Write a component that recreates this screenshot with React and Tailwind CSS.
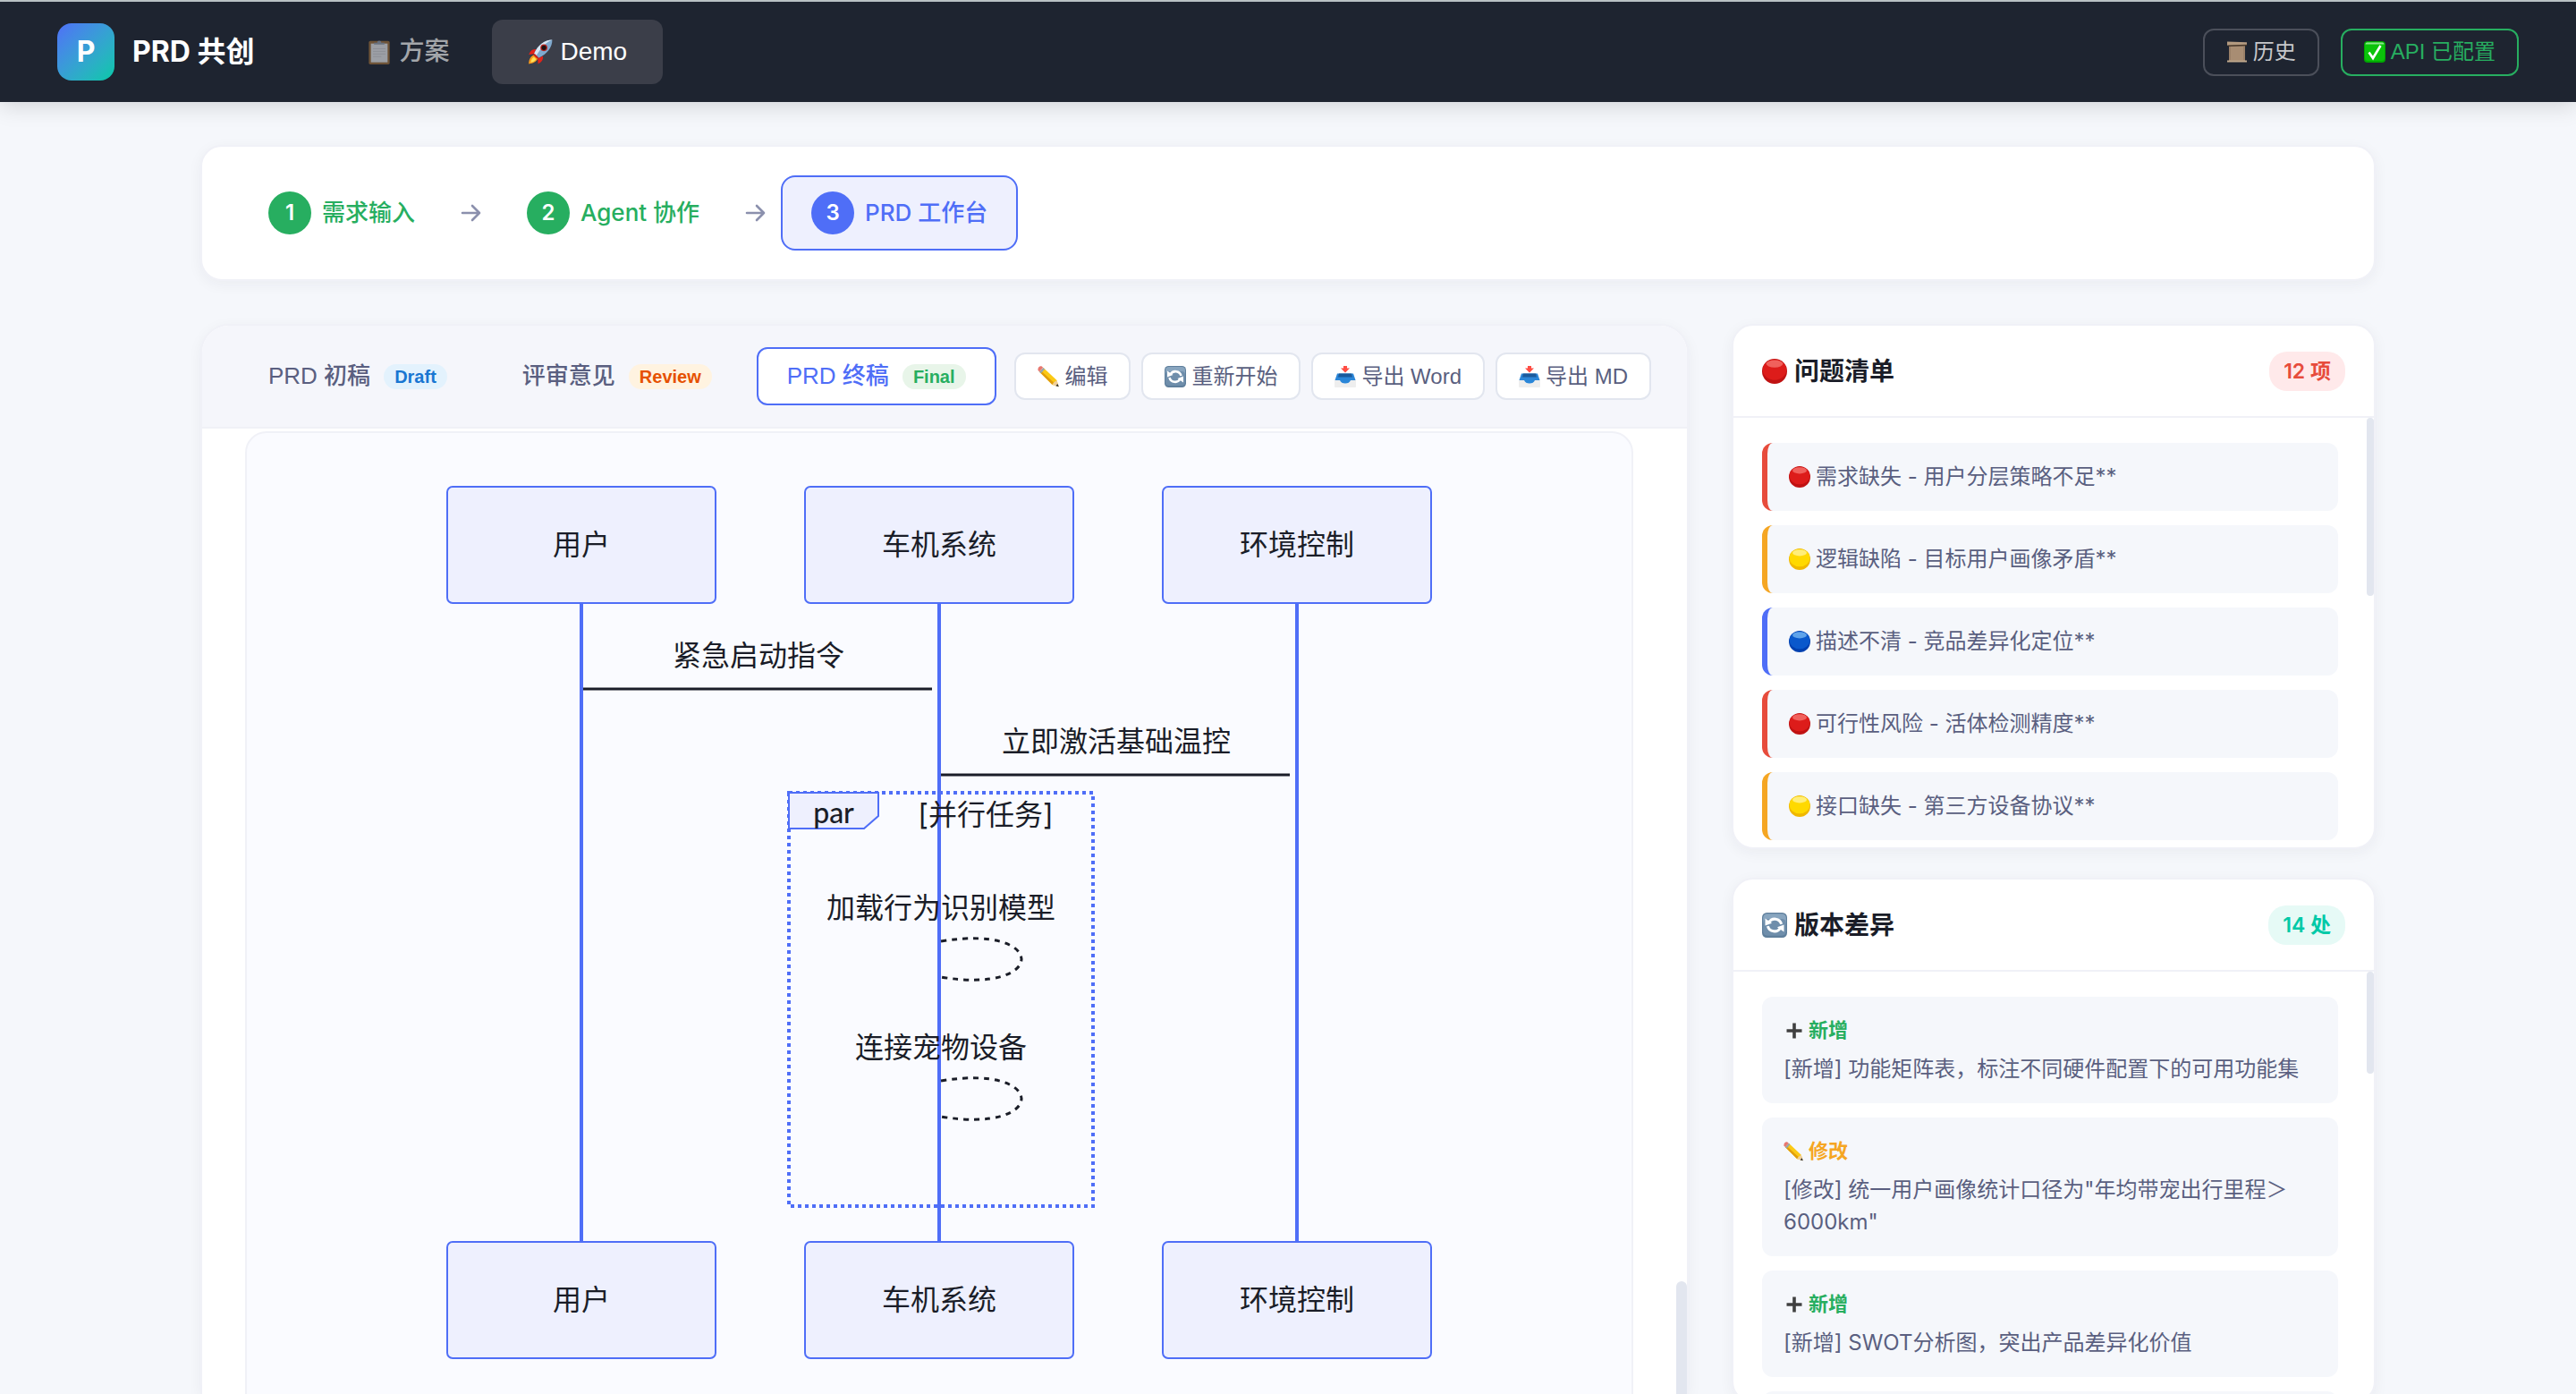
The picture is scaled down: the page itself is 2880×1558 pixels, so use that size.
import React, { useState } from 'react';

const uiFont = "font-['Inter','Noto_Sans_CJK_SC',sans-serif]";
const btnFont = "font-['Liberation_Sans','Noto_Sans_CJK_SC',sans-serif]";

/* ---------- Icons ---------- */

const Clipboard = ({ className }) => (
    <svg className={className} viewBox="0 0 24 24">
        <rect x="2" y="1.5" width="20" height="22.5" rx="1.5" fill="#a3733c" />
        <rect x="4" y="4" width="16" height="18" fill="#f1f1f3" />
        <path d="M6 9h12M6 11.5h12M6 14h12M6 16.500h8" stroke="#d5d5da" strokeWidth=".8" />
        <path d="M7 5V3.200h3a2 2 0 0 1 4 0h3V5z" fill="#9aa4b4" />
    </svg>
);

const Rocket = ({ className }) => (
    <svg className={className} viewBox="0 0 24 24">
        <path d="M8 9.500C4.500 9 2.500 11 1 14.500l5.500-.500zM14.500 16c.500 3.500-1 5.500-4.500 7.500l-.500-5.500z" fill="#e2231a" />
        <path d="M6 15c-3 1-5 4-5 8.500 4-.500 7.500-2 8.500-5z" fill="#ff9d1c" />
        <path d="M6 17c-1.500.800-2.700 2.300-3 5 2.500-.400 4-1.300 5-3z" fill="#ffe45c" />
        <path d="M23.500.500C16.500.500 10 5 6 14l4 4c9-4 13.500-10.500 13.500-17.500z" fill="#7fa9cf" />
        <path d="M23.500.500C16.500.500 10 5 6 14l2 2C13 8 17 3 23.500.500z" fill="#d9e6f2" />
        <circle cx="15.500" cy="8" r="3.300" fill="#b5211c" />
        <circle cx="15.500" cy="8" r="2.200" fill="#1b1416" />
        <path d="M6.500 13.500l4 4-1.500 1-3.500-3.500z" fill="#c8201a" />
    </svg>
);

const Scroll = ({ className }) => (
    <svg className={className} viewBox="0 0 24 24">
        <path d="M3 2h18v20H3z" fill="#9a8068" />
        <path d="M5 6h14v15H5z" fill="#a88d73" />
        <path d="M1 .500l22 .800v3L1 5z" fill="#b39a80" />
        <path d="M1 4.500l22-.700v1.500L3 6z" fill="#4a392b" />
        <path d="M1 21.500h22v2H1z" fill="#c0a88d" />
    </svg>
);

const CheckBox = ({ className }) => (
    <svg className={className} viewBox="0 0 24 24">
        <rect width="24" height="24" rx="4" fill="#00a800" />
        <rect x="1" y="1" width="22" height="21" rx="3.500" fill="#0bc30b" />
        <path d="M3 1.500h18a2 2 0 0 1 1.500 2H1.500A2 2 0 0 1 3 1.500z" fill="#8be98b" />
        <path d="M5.500 12.500l4.500 6.500 8.500-14" fill="none" stroke="#fff" strokeWidth="2.600" />
    </svg>
);

const Pencil = ({ className }) => (
    <svg className={className} viewBox="0 0 24 24">
        <path d="M6.500 2l15 14 2 7-7-2L2 6.500z" fill="#fbc914" />
        <path d="M4 5.500L18.200 18.500l-1.700 2.500L2 6.500z" fill="#e09d0c" />
        <path d="M21.500 16l2 7-7-2 1.700-2.500z" fill="#f0cf9c" />
        <path d="M22.500 20l1.300 3.300-3.500-1z" fill="#333" />
        <path d="M8 3.500L3.800 8.200 2 6.500 6.500 2z" fill="#93a5b5" />
        <path d="M6.200 1.800L2 6.500.500 4.700C0 2 2 0 4.500.300z" fill="#e8776f" />
    </svg>
);

const Refresh = ({ className }) => (
    <svg className={className} viewBox="0 0 24 24">
        <rect width="24" height="24" rx="4.500" fill="#5f7f9c" />
        <rect x="1" y="1" width="22" height="12" rx="4" fill="#88a5bf" />
        <rect x="1" y="6" width="22" height="16" rx="4" fill="#6f8eab" />
        <path d="M6.500 9.500a6.500 6.500 0 0 1 12 1.500M17.500 14.500a6.500 6.500 0 0 1-12-1.500" fill="none" stroke="#fff" strokeWidth="2.600" />
        <path d="M3 5.500v7l6.500-2.500zM21 18.500v-7L14.500 14z" fill="#fff" />
    </svg>
);

const Outbox = ({ className }) => (
    <svg className={className} viewBox="0 0 24 24">
        <path d="M3.500 8.500h17l3.500 8v6.500a1 1 0 0 1-1 1H1a1 1 0 0 1-1-1v-6.500z" fill="#eeeeee" />
        <path d="M3 8.500h18l2.500 7.500H18c-1 2.500-3 3.500-6 3.500S7 18.500 6 16H.500z" fill="#2a86d8" />
        <path d="M5 8.500h14l1 4H4z" fill="#1a5a9c" />
        <path d="M10 0h4v2.500h3l-5 5-5-5h3z" fill="#ff4d44" />
    </svg>
);

const Plus = ({ className }) => (
    <svg className={className} viewBox="0 0 22 22">
        <path d="M12 2.500v17M3.500 11h17" stroke="#404040" strokeWidth="3.600" />
    </svg>
);

const ballTone = {
    red: { base: 'fill-[#c01212]', mid: 'fill-[#dd1c1a]', top: 'fill-[#f0615c]' },
    yellow: { base: 'fill-[#f0b800]', mid: 'fill-[#ffd900]', top: 'fill-[#ffee7a]' },
    blue: { base: 'fill-[#0040b0]', mid: 'fill-[#0a58cc]', top: 'fill-[#5fa3ea]' },
};

const Ball = ({ tone, className }) => (
    <svg className={className} viewBox="0 0 24 24">
        <circle cx="12" cy="12" r="12" className={ballTone[tone].base} />
        <ellipse cx="12" cy="10.500" rx="11.300" ry="9.800" className={ballTone[tone].mid} />
        <ellipse cx="12" cy="4.800" rx="8" ry="3.600" className={ballTone[tone].top} />
    </svg>
);

const Arrow = () => (
    <svg className="w-[25px] h-[26px] mx-4 shrink-0" viewBox="0 0 25 26" fill="none" stroke="#8b90ad" strokeWidth="2.600" strokeLinecap="round" strokeLinejoin="round">
        <path d="M3 13h19M14 5l8 8-8 8" />
    </svg>
);

/* ---------- Data ---------- */

const tabs = [
    { id: 'draft', label: 'PRD 初稿', tag: 'Draft', tagClass: 'bg-[#e3f2fd] text-[#1976d2]' },
    { id: 'review', label: '评审意见', tag: 'Review', tagClass: 'bg-[#fff3e0] text-[#e65100]' },
    { id: 'final', label: 'PRD 终稿', tag: 'Final', tagClass: 'bg-[#e8f5e9] text-[#27ae60]' },
];

const actions = [
    { label: '编辑', Icon: Pencil },
    { label: '重新开始', Icon: Refresh },
    { label: '导出 Word', Icon: Outbox },
    { label: '导出 MD', Icon: Outbox },
];

const issues = [
    { tone: 'red', text: '需求缺失 - 用户分层策略不足**' },
    { tone: 'yellow', text: '逻辑缺陷 - 目标用户画像矛盾**' },
    { tone: 'blue', text: '描述不清 - 竞品差异化定位**' },
    { tone: 'red', text: '可行性风险 - 活体检测精度**' },
    { tone: 'yellow', text: '接口缺失 - 第三方设备协议**' },
];

const issueBorder = {
    red: 'border-[#e74c3c]',
    yellow: 'border-[#f5a623]',
    blue: 'border-[#4f6ef7]',
};

const diffs = [
    { type: 'add', text: '[新增] 功能矩阵表，标注不同硬件配置下的可用功能集' },
    { type: 'edit', text: '[修改] 统一用户画像统计口径为"年均带宠出行里程＞6000km"' },
    { type: 'add', text: '[新增] SWOT分析图，突出产品差异化价值' },
];

/* ---------- Sequence diagram ---------- */

const actors = [
    { name: '用户', x: 152 },
    { name: '车机系统', x: 552 },
    { name: '环境控制', x: 952 },
];

const SequenceDiagram = () => (
    <svg className="w-[1104px] max-w-full mx-auto text-[32px]" viewBox="0 0 1104 978" fill="#1a1d28" textAnchor="middle">
        {actors.map(a => (
            <g key={a.name}>
                <path d={`M${a.x} 132V846`} stroke="#4f6ef7" strokeWidth="4" />
                <rect x={a.x - 150} y="2" width="300" height="130" rx="6" fill="#eef0fe" stroke="#4f6ef7" strokeWidth="2" />
                <text x={a.x} y="78">{a.name}</text>
                <rect x={a.x - 150} y="846" width="300" height="130" rx="6" fill="#eef0fe" stroke="#4f6ef7" strokeWidth="2" />
                <text x={a.x} y="922">{a.name}</text>
            </g>
        ))}

        <text x="350" y="202">紧急启动指令</text>
        <path d="M154 228H544" stroke="#1a1d28" strokeWidth="3" />
        <text x="750" y="298">立即激活基础温控</text>
        <path d="M554 324H944" stroke="#1a1d28" strokeWidth="3" />

        {/* par block */}
        <path d="M384 344H724V806H384Z" fill="none" stroke="#4f6ef7" strokeWidth="4" strokeDasharray="4 4" />
        <path d="M384 344H484V370L468 384H384Z" fill="#eef0fe" stroke="#4f6ef7" strokeWidth="2" />
        <text x="434" y="378" className="font-['Lato'] font-medium">par</text>
        <text x="604" y="380">[并行任务]</text>

        <g fill="none" stroke="#1a1d28" strokeWidth="3" strokeDasharray="6 6">
            <path d="M554 510C674 490 674 570 554 550" />
            <path d="M554 666C674 646 674 726 554 706" />
        </g>
        <text x="554" y="484">加载行为识别模型</text>
        <text x="554" y="640">连接宠物设备</text>
    </svg>
);

/* ---------- Parts ---------- */

const Step = ({ num, label, active }) => (
    <li className={`flex items-center gap-3 px-8 py-4 rounded-2xl border-2 text-[26px] leading-[48px] font-medium ${active ? 'bg-[#eef0fe] border-[#4f6ef7] text-[#4f6ef7]' : 'border-transparent text-[#27ae60]'}`}>
        <span className={`size-12 rounded-full text-white text-2xl leading-[48px] font-semibold text-center ${active ? 'bg-[#4f6ef7]' : 'bg-[#27ae60]'}`}>{num}</span>
        {label}
    </li>
);

const SideCard = ({ icon, title, count, countClass, thumbClass, children }) => (
    <section className="shrink-0 bg-white rounded-[24px] border-2 border-[#f0f1f7] shadow-[0_4px_16px_rgba(30,36,60,0.05)] overflow-hidden">
        <header className="h-[103px] flex items-center justify-between px-8 border-b-2 border-[#f0f1f7]">
            <h2 className="flex items-center gap-2 text-[28px] font-semibold text-[#1a1d28]">{icon}{title}</h2>
            <span className={`px-4 py-1 rounded-[20px] text-[23px] leading-9 font-semibold ${countClass}`}>{count}</span>
        </header>
        <div className="relative h-[480px] overflow-hidden">
            <ul className="flex flex-col gap-4 pl-8 pr-10 py-7">{children}</ul>
            <div className={`absolute top-0 right-0 w-2 rounded-full bg-[#e2e6ef] ${thumbClass}`}></div>
        </div>
    </section>
);

const App = () => {
    const [tab, setTab] = useState('final');

    return (
        <div className={`h-screen flex flex-col overflow-hidden bg-[#f5f7fb] text-[#5a5f80] ${uiFont}`}>
            {/* Top bar */}
            <header className="relative z-10 shrink-0 h-[114px] flex items-center px-16 bg-[#1e2430] border-t-2 border-[#b9c1c4] shadow-[0_4px_24px_rgba(0,0,0,0.15)]">
                <div className="flex items-center gap-5">
                    <div className="size-16 rounded-2xl bg-linear-135 from-[#4f6ef7] to-[#00c9a7] text-white text-[32px] leading-[64px] font-bold text-center">P</div>
                    <h1 className="text-[32px] font-bold text-white">PRD 共创</h1>
                </div>
                <nav className={`flex gap-2 ml-[86px] text-[28px] font-medium ${btnFont}`}>
                    <button className="h-[72px] flex items-center gap-2 px-10 rounded-xl text-white/60">
                        <Clipboard className="size-7 opacity-60" />方案
                    </button>
                    <button className="h-[72px] flex items-center gap-2 px-10 rounded-xl text-white bg-[#3b3e49]">
                        <Rocket className="size-7" />Demo
                    </button>
                </nav>
                <div className={`flex gap-6 ml-auto text-2xl ${btnFont}`}>
                    <button className="h-[53px] flex items-center gap-1.5 px-6 rounded-xl border-2 border-[#4b4f5a] text-[#c7c8cb]">
                        <Scroll className="size-6" />历史
                    </button>
                    <button className="h-[53px] flex items-center gap-1.5 px-6 rounded-xl border-2 border-[#27ae60] text-[#27ae60]">
                        <CheckBox className="size-6" />API 已配置
                    </button>
                </div>
            </header>

            <main className="flex-1 min-h-0 w-full max-w-[2560px] mx-auto px-16 pt-12 flex flex-col gap-12">
                {/* Steps */}
                <ol className="shrink-0 flex items-center px-10 py-8 bg-white rounded-[24px] border-2 border-[#f0f1f7] shadow-[0_4px_16px_rgba(30,36,60,0.05)]">
                    <Step num="1" label="需求输入" />
                    <Arrow />
                    <Step num="2" label="Agent 协作" />
                    <Arrow />
                    <Step num="3" label="PRD 工作台" active />
                </ol>

                <div className="flex-1 min-h-0 flex gap-12">
                    {/* Document panel */}
                    <section className="flex-1 min-w-0 flex flex-col bg-white rounded-t-[32px] border-2 border-b-0 border-[#f0f1f7] shadow-[0_4px_16px_rgba(30,36,60,0.05)] overflow-hidden">
                        <div className={`shrink-0 flex items-center px-10 py-6 bg-[#f5f6fb] border-b-2 border-[#f0f1f7] ${btnFont}`}>
                            <div className="flex gap-4">
                                {tabs.map(item => (
                                    <button key={item.id} onClick={() => setTab(item.id)}
                                        className={`h-[65px] flex items-center gap-[15px] px-8 rounded-xl border-2 text-[26px] font-medium whitespace-nowrap ${tab === item.id ? 'bg-white border-[#4f6ef7] text-[#4f6ef7]' : 'border-transparent text-[#5a5f80]'}`}
                                    >
                                        {item.label}
                                        <span className={`px-3 rounded-[14px] text-xl leading-7 font-bold ${item.tagClass}`}>{item.tag}</span>
                                    </button>
                                ))}
                            </div>
                            <div className="flex gap-3 ml-auto">
                                {actions.map(({ label, Icon }) => (
                                    <button key={label} className="h-[53px] flex items-center gap-1.5 px-6 bg-white rounded-xl border-2 border-[#e2e6ef] text-2xl whitespace-nowrap">
                                        <Icon className="size-6" />{label}
                                    </button>
                                ))}
                            </div>
                        </div>

                        <div className="relative flex-1 min-h-0 overflow-hidden pl-12 pr-[60px] pt-[3px]">
                            <div className="pt-[58px] pb-16 bg-[#fafbff] rounded-[24px] border-2 border-[#f0f1f7]">
                                <SequenceDiagram />
                            </div>
                            <div className="absolute bottom-0 right-0 w-3 h-[126px] rounded-t-full bg-[#e2e6ef]"></div>
                        </div>
                    </section>

                    {/* Sidebar */}
                    <aside className="w-[720px] shrink-0 flex flex-col gap-8">
                        <SideCard
                            icon={<Ball tone="red" className="size-7" />}
                            title="问题清单" count="12 项"
                            countClass="bg-[#ffe9ea] text-[#e74c3c]"
                            thumbClass="h-[199px]"
                        >
                            {issues.map(item => (
                                <li key={item.text} className={`flex items-center gap-1.5 px-6 py-5 bg-[#f5f7fb] rounded-xl border-l-[6px] text-2xl leading-9 ${issueBorder[item.tone]}`}>
                                    <Ball tone={item.tone} className="size-6" />{item.text}
                                </li>
                            ))}
                        </SideCard>

                        <SideCard
                            icon={<Refresh className="size-7" />}
                            title="版本差异" count="14 处"
                            countClass="bg-[#e6faf6] text-[#00c9a7]"
                            thumbClass="h-[114px]"
                        >
                            {diffs.map(item => (
                                <li key={item.text} className="px-6 py-5 bg-[#f5f7fb] rounded-xl">
                                    <div className={`flex items-center gap-1.5 mb-2 text-[22px] leading-[35px] font-semibold ${item.type === 'add' ? 'text-[#27ae60]' : 'text-[#f5a623]'}`}>
                                        {item.type === 'add' ? <Plus className="size-[22px]" /> : <Pencil className="size-[22px]" />}
                                        {item.type === 'add' ? '新增' : '修改'}
                                    </div>
                                    <p className="text-2xl leading-9">{item.text}</p>
                                </li>
                            ))}
                            {/* placeholder row */}
                            <li className="h-[119px] bg-[#f5f7fb] rounded-xl"></li>
                        </SideCard>
                    </aside>
                </div>
            </main>
        </div>
    );
};

export default App;
